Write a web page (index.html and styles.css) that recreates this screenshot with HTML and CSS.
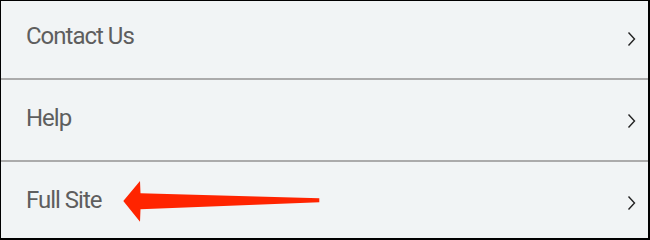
FILE: index.html
```html
<!DOCTYPE html>
<html lang="en">
<head>
<meta charset="utf-8">
<title>Menu</title>
<link rel="stylesheet" href="styles.css">
</head>
<body>
<div class="frame">
  <ul class="menu">
    <li class="item"><span class="label">Contact Us</span>
      <svg class="chev" width="9" height="16" viewBox="0 0 9 16"><path d="M1.5 1.5 L7.5 8 L1.5 14.5" fill="none" stroke="#222" stroke-width="1.4"/></svg>
    </li>
    <li class="item"><span class="label">Help</span>
      <svg class="chev" width="9" height="16" viewBox="0 0 9 16"><path d="M1.5 1.5 L7.5 8 L1.5 14.5" fill="none" stroke="#222" stroke-width="1.4"/></svg>
    </li>
    <li class="item"><span class="label">Full Site</span>
      <svg class="chev" width="9" height="16" viewBox="0 0 9 16"><path d="M1.5 1.5 L7.5 8 L1.5 14.5" fill="none" stroke="#222" stroke-width="1.4"/></svg>
    </li>
  </ul>
  <svg class="arrow" width="647" height="237" viewBox="0 0 647 237">
    <polygon points="122.3,200 139,180 139.5,192.3 318.3,197.3 318.3,201.3 139.5,208.3 139,220.7" fill="#ff2400"/>
  </svg>
</div>
</body>
</html>
```

FILE: styles.css
```css
html, body {
  margin: 0;
  padding: 0;
  background: #000;
}
.frame {
  position: relative;
  width: 647px;
  height: 237px;
  border-style: solid;
  border-color: #000;
  border-width: 1px 2px 2px 1px;
  background: #f1f4f5;
  overflow: hidden;
}
.menu {
  list-style: none;
  margin: -3px 0 0 0;
  padding: 0;
}
.item {
  height: 80px;
  display: flex;
  align-items: center;
  justify-content: space-between;
  padding: 0 12px 0 25px;
  border-bottom: 2px solid #ababab;
}
.label {
  font-family: Roboto, "Liberation Sans", sans-serif;
  font-size: 24px;
  letter-spacing: -1px;
  color: #5e5e5e;
  margin-bottom: 4px;
}
.chev {
  display: block;
  margin-top: 1px;
}
.arrow {
  position: absolute;
  left: 0;
  top: 0;
}
```
